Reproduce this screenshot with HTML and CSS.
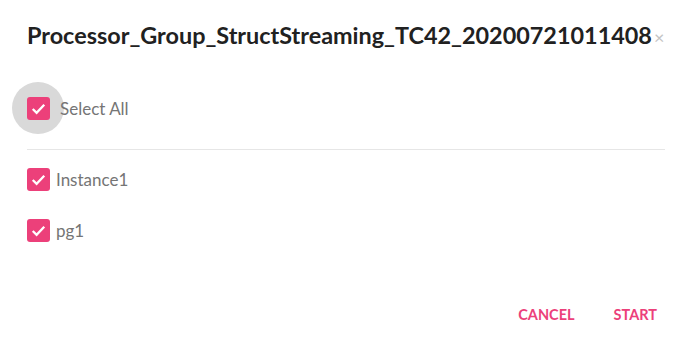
FILE: index.html
```html
<!DOCTYPE html>
<html lang="en">
<head>
    <meta charset="UTF-8">
    <title>Start Processor Group</title>
    <link rel="stylesheet" href="styles.css">
</head>
<body>
    <div class="dialog">
        <div class="dialog-header">
            <h2 class="dialog-title">Processor_Group_StructStreaming_TC42_20200721011408</h2>
            <span class="close-btn">&times;</span>
        </div>

        <div class="select-all">
            <label class="check-row">
                <span class="ripple">
                    <span class="checkbox"><svg viewBox="0 0 24 24"><path d="M6 12.5l4 4 8-8.5" /></svg></span>
                </span>
                <span class="check-label">Select All</span>
            </label>
        </div>

        <div class="instance-list">
            <label class="check-row">
                <span class="checkbox"><svg viewBox="0 0 24 24"><path d="M6 12.5l4 4 8-8.5" /></svg></span>
                <span class="check-label">Instance1</span>
            </label>
            <label class="check-row">
                <span class="checkbox"><svg viewBox="0 0 24 24"><path d="M6 12.5l4 4 8-8.5" /></svg></span>
                <span class="check-label">pg1</span>
            </label>
        </div>

        <div class="dialog-actions">
            <button class="btn">Cancel</button>
            <button class="btn">Start</button>
        </div>
    </div>
</body>
</html>
```

FILE: styles.css
```css
body {
    margin: 0;
    background-color: #fff;
    font-family: 'Lato', 'Noto Sans', sans-serif;
}

.dialog {
    display: flex;
    flex-direction: column;
    height: 346px;
    padding: 0 12px 0 27px;
    box-sizing: border-box;
}

.dialog-header {
    display: flex;
    align-items: baseline;
    padding-top: 21px;
}

.dialog-title {
    margin: 0;
    font-size: 23.4px;
    font-weight: 700;
    color: #212121;
    white-space: nowrap;
}

.close-btn {
    font-size: 18px;
    color: #c4c4c4;
    margin-left: 2px;
}

.select-all {
    margin-top: 47px;
    padding-bottom: 29px;
    border-bottom: 1px solid #e6e6e6;
}

.check-row {
    display: flex;
    align-items: center;
}

.ripple {
    display: flex;
    align-items: center;
    justify-content: center;
    width: 52px;
    height: 52px;
    margin: -14px -14px -14px -15px;
    border-radius: 50%;
    background-color: #d9d9d9;
}

.checkbox {
    display: flex;
    width: 23px;
    height: 23px;
    border-radius: 3px;
    background-color: #ec407a;
    flex-shrink: 0;
}

.checkbox svg {
    width: 23px;
    height: 23px;
    fill: none;
    stroke: #fff;
    stroke-width: 2.4;
}

.check-label {
    font-size: 17px;
    color: #757575;
    margin-left: 6px;
}

.select-all .check-label {
    margin-left: 10px;
}

.instance-list {
    display: flex;
    flex-direction: column;
    gap: 28px;
    margin-top: 18px;
}

.dialog-actions {
    display: flex;
    justify-content: flex-end;
    gap: 23px;
    margin-top: auto;
    padding-bottom: 17px;
}

.btn {
    background: none;
    border: none;
    padding: 6px 8px;
    font-family: inherit;
    font-size: 14.5px;
    font-weight: 700;
    color: #ec407a;
    text-transform: uppercase;
    cursor: pointer;
}
```
